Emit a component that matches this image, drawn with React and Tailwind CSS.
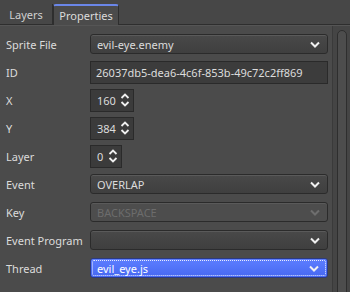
import React from 'react';

const Chevron = ({ dim }) => (
  <svg width="10" height="7" viewBox="0 0 10 7" className="shrink-0">
    <path d="M1 1.5 L5 5.5 L9 1.5" fill="none" stroke={dim ? '#6e6e6e' : '#f0f0f0'} strokeWidth="2" />
  </svg>
);

const SpinArrows = () => (
  <svg width="10" height="16" viewBox="0 0 10 16" className="shrink-0">
    <path d="M1.5 6 L5 2.5 L8.5 6" fill="none" stroke="#f0f0f0" strokeWidth="1.8" />
    <path d="M1.5 10 L5 13.5 L8.5 10" fill="none" stroke="#f0f0f0" strokeWidth="1.8" />
  </svg>
);

const Combo = ({ value, disabled, focused }) => {
  if (focused) {
    return (
      <div className="flex h-[20px] w-full items-center rounded-[3px] border border-[#2c3a80] bg-gradient-to-b from-[#5d7eff] to-[#4768f2] p-px">
        <div className="flex h-full w-full items-center justify-between rounded-[2px] border border-dotted border-[#e6ebff] pl-[4px] pr-[6px] text-white">
          <span>{value}</span>
          <Chevron />
        </div>
      </div>
    );
  }
  return (
    <div
      className={`flex h-[20px] w-full items-center justify-between rounded-[3px] border border-[#2b2b2b] pl-[6px] pr-[7px] shadow-[inset_0_1px_0_#5a5a5a] ${
        disabled ? 'bg-[#4d4d4d] text-[#6c6c6c]' : 'bg-gradient-to-b from-[#494949] to-[#3f3f3f] text-[#dcdcdc]'
      }`}
    >
      <span>{value}</span>
      <Chevron dim={disabled} />
    </div>
  );
};

const Spin = ({ value, width }) => (
  <div className={`flex h-[23px] ${width} items-center justify-between border border-[#2a2a2a] bg-[#3b3b3b] pl-[6px] pr-[3px] text-[#dcdcdc]`}>
    <span>{value}</span>
    <SpinArrows />
  </div>
);

const Row = ({ label, children }) => (
  <div className="flex h-[28px] items-center">
    <div className="w-[84px] shrink-0 text-[#dcdcdc]">{label}</div>
    <div className="flex flex-1">{children}</div>
  </div>
);

export default function App() {
  return (
    <div
      className="flex h-[292px] w-[350px] flex-col overflow-hidden bg-[#4b4b4b] text-[11px] leading-none"
      style={{ fontFamily: '"Noto Sans", sans-serif' }}
    >
      {/* tab bar */}
      <div className="relative flex h-[25px] shrink-0 items-end border-b border-[#2e2e2e] bg-[#474747]">
        <div className="flex h-[20px] w-[53px] items-center justify-center border-r border-[#2e2e2e] text-[#d0d0d0]">
          Layers
        </div>
        <div className="relative -mb-px flex h-[21px] w-[66px] items-center justify-center rounded-t-[3px] border-x border-t-2 border-[#2e2e2e] border-t-[#6a86e8] bg-[#4b4b4b] text-[#dcdcdc]">
          Properties
        </div>
      </div>

      <div className="flex flex-1 border-t border-[#555555]">
        <div className="flex flex-1 flex-col pl-[6px] pr-[4px] pt-[4px]">
          <Row label="Sprite File">
            <Combo value="evil-eye.enemy" />
          </Row>
          <Row label="ID">
            <div className="flex h-[23px] w-full items-center border border-[#2a2a2a] bg-[#3c3c3c] pl-[5px] text-[#dcdcdc]">
              26037db5-dea6-4c6f-853b-49c72c2ff869
            </div>
          </Row>
          <Row label="X">
            <Spin value="160" width="w-[44px]" />
          </Row>
          <Row label="Y">
            <Spin value="384" width="w-[44px]" />
          </Row>
          <Row label="Layer">
            <Spin value="0" width="w-[32px]" />
          </Row>
          <Row label="Event">
            <Combo value="OVERLAP" />
          </Row>
          <Row label="Key">
            <Combo value="BACKSPACE" disabled />
          </Row>
          <Row label="Event Program">
            <Combo value="" />
          </Row>
          <Row label="Thread">
            <Combo value="evil_eye.js" focused />
          </Row>
        </div>

        {/* scrollbar */}
        <div className="flex w-[18px] shrink-0 justify-center border-l border-[#3a3a3a] bg-[#454545] pt-[4px]">
          <div className="h-[300px] w-[10px] rounded-full border border-[#2e2e2e] bg-[#4d4d4d]" />
        </div>
      </div>
    </div>
  );
}
